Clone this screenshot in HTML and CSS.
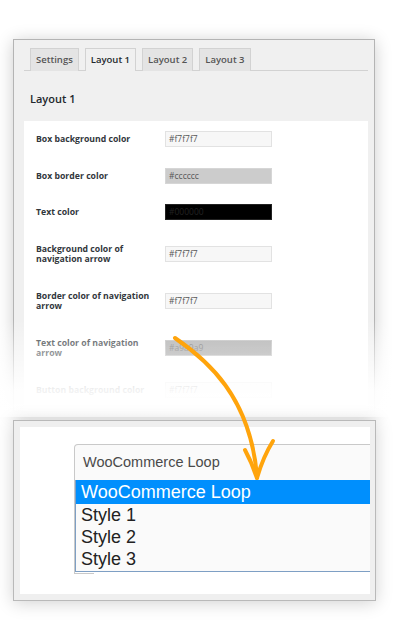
FILE: index.html
```html
<!DOCTYPE html>
<html>
<head>
<meta charset="utf-8">
<link rel="stylesheet" href="styles.css">
</head>
<body>
<div class="stage">
  <div class="panel-top">
    <div class="tabs">
      <div class="tab">Settings</div>
      <div class="tab active">Layout 1</div>
      <div class="tab">Layout 2</div>
      <div class="tab">Layout 3</div>
    </div>
    <h2 class="heading">Layout 1</h2>
    <div class="form">
      <div class="row"><div class="label">Box background color</div><div class="field"><div class="input c-f7">#f7f7f7</div></div></div>
      <div class="row"><div class="label">Box border color</div><div class="field"><div class="input c-cc">#cccccc</div></div></div>
      <div class="row"><div class="label">Text color</div><div class="field"><div class="input c-00">#000000</div></div></div>
      <div class="row"><div class="label">Background color of navigation arrow</div><div class="field"><div class="input c-f7">#f7f7f7</div></div></div>
      <div class="row"><div class="label">Border color of navigation arrow</div><div class="field"><div class="input c-f7">#f7f7f7</div></div></div>
      <div class="row"><div class="label">Text color of navigation arrow</div><div class="field"><div class="input c-a9">#a9a9a9</div></div></div>
      <div class="row"><div class="label">Button background color</div><div class="field"><div class="input c-f7">#f7f7f7</div></div></div>
    </div>
  </div>
  <div class="fade"></div>
  <div class="panel-bottom">
    <div class="canvas">
      <div class="select">
        <div class="select-head">WooCommerce Loop</div>
        <div class="select-stub"></div>
        <ul class="options">
          <li class="opt selected">WooCommerce Loop</li>
          <li class="opt">Style 1</li>
          <li class="opt">Style 2</li>
          <li class="opt">Style 3</li>
        </ul>
      </div>
    </div>
  </div>
  <svg class="arrow" width="400" height="636" viewBox="0 0 400 636">
    <path d="M175 338 C207 360 250 396 257 476" fill="none" stroke="#ffa40c" stroke-width="4" stroke-linecap="round"/>
    <path d="M245 450 Q252 463 257 478" fill="none" stroke="#ffa40c" stroke-width="4" stroke-linecap="round"/>
    <path d="M273 441 Q263 457 257 478" fill="none" stroke="#ffa40c" stroke-width="4" stroke-linecap="round"/>
  </svg>
</div>
</body>
</html>
```
FILE: styles.css
```css
* { box-sizing: border-box; }
html, body { margin: 0; padding: 0; background: #fff; }
body { font-family: "Open Sans", "Noto Sans", sans-serif; width: 400px; height: 636px; overflow: hidden; }

.stage { position: relative; width: 400px; height: 636px; padding: 39px 0 0 13px; }

.panel-top {
  width: 362px;
  height: 373px;
  border: 1px solid #b4b4b4;
  background: #f0f0f0;
  box-shadow: 0 2px 16px rgba(0,0,0,0.2);
  padding: 8px 6px 0 10px;
  overflow: hidden;
}

.tabs {
  display: flex;
  gap: 6px;
  padding-left: 6px;
  height: 23px;
  border-bottom: 1px solid #d2d2d2;
}
.tab {
  height: 23px;
  padding: 0 5px;
  border: 1px solid #d2d2d2;
  border-bottom: none;
  background: #e4e4e4;
  color: #555;
  font-size: 9.5px;
  font-weight: 600;
  line-height: 21px;
}
.tab.active {
  background: #f0f0f0;
  color: #23282d;
  box-shadow: 0 1px 0 #f0f0f0;
}

.heading {
  margin: 21px 0 15px 6px;
  font-size: 11px;
  font-weight: 600;
  line-height: 14px;
  color: #23282d;
}

.form { background: #fff; padding-bottom: 30px; }
.row { display: grid; grid-template-columns: 141px 1fr; align-items: center; }
.label {
  padding: 13px 14px 13px 12px;
  font-size: 8.7px;
  line-height: 10.5px;
  font-weight: 700;
  color: #32373c;
}
.field { padding: 10px 0; }
.input {
  width: 107px;
  height: 16px;
  border: 1px solid #e2e2e2;
  font-size: 8.5px;
  line-height: 14px;
  padding-left: 3px;
  color: #555;
}
.c-f7 { background: #f7f7f7; }
.c-cc { background: #cccccc; border-color: #d6d6d6; }
.c-00 { background: #000000; color: #222; border-color: #222; }
.c-a9 { background: linear-gradient(#a9a9a9, #999); color: #666; border-color: #bbb; }

.fade {
  position: absolute;
  left: 0;
  top: 320px;
  width: 400px;
  height: 97px;
  background: linear-gradient(rgba(255,255,255,0) 0%, rgba(255,255,255,0.4) 28%, rgba(255,255,255,0.93) 72%, #fff 100%);
  z-index: 1;
}

.panel-bottom {
  position: relative;
  z-index: 2;
  margin-top: 8px;
  width: 363px;
  height: 181px;
  border: 1px solid #b9b9b9;
  background: #efefef;
  box-shadow: 0 2px 16px rgba(0,0,0,0.18);
  padding: 6px 5px 6px 6px;
}
.canvas {
  height: 100%;
  background: #fff;
  overflow: hidden;
  padding: 17px 0 0 54px;
}
.select { position: relative; width: 330px; font-family: "Liberation Sans", Arial, sans-serif; }
.select-head {
  height: 36px;
  border: 1px solid #c9c9c9;
  border-bottom: none;
  border-top-left-radius: 4px;
  background: #fafafa;
  color: #4a4a4a;
  font-size: 14.5px;
  line-height: 34px;
  padding-left: 8px;
}
.select-stub {
  width: 20px;
  height: 94px;
  border-left: 1px solid #c9c9c9;
  border-bottom: 1px solid #c9c9c9;
}
.options {
  position: absolute;
  left: 1px;
  top: 36px;
  right: 0;
  margin: 0;
  padding: 0 0 1px;
  list-style: none;
  background: #fafafa;
  border-left: 1px solid #7e9fc4;
  border-bottom: 1px solid #7e9fc4;
}
.opt {
  height: 22px;
  line-height: 22px;
  padding-left: 5px;
  font-size: 18px;
  color: #222;
}
.opt.selected {
  height: 24px;
  line-height: 24px;
  background: #008ffd;
  color: #fff;
}

.arrow { position: absolute; left: 0; top: 0; z-index: 3; pointer-events: none; }
```
